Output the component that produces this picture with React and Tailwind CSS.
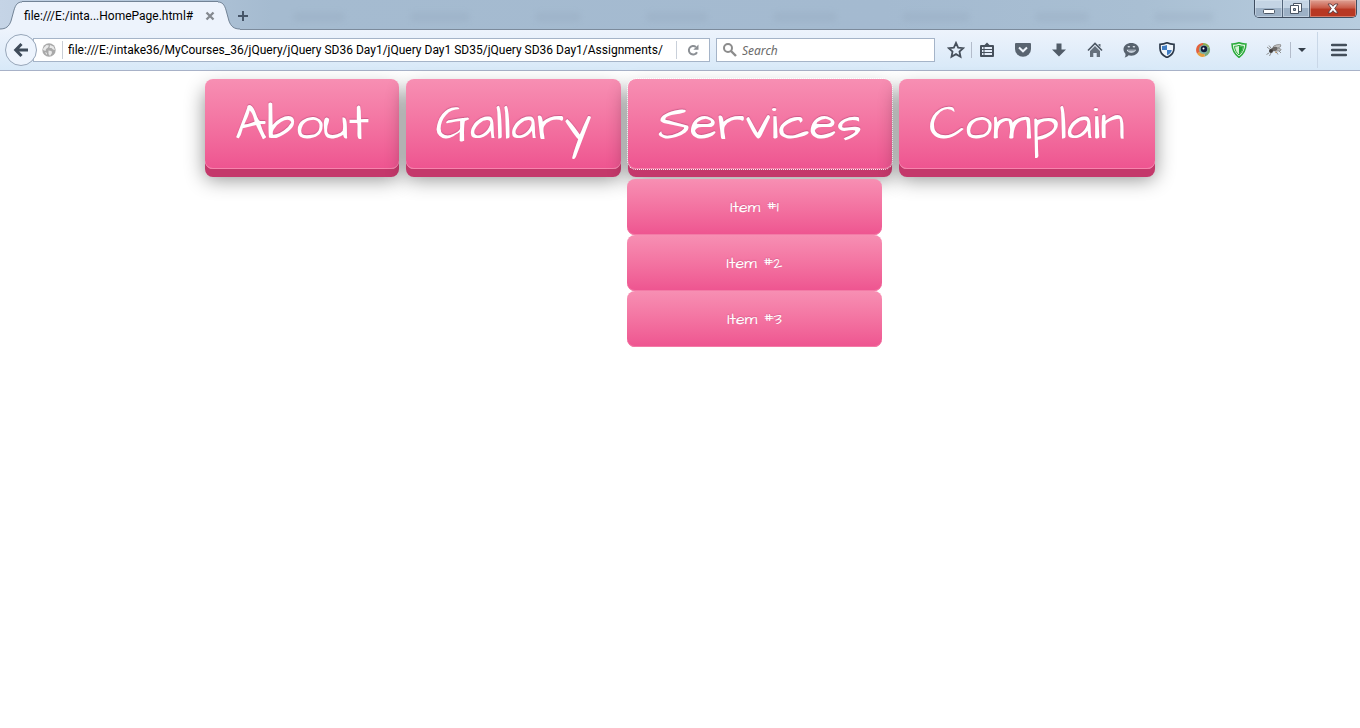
import React from "react";

const menu = [
  { label: "About", size: "w-[194px]" },
  { label: "Gallary", size: "w-[215px]" },
  { label: "Services", size: "w-[264px]", items: ["Item #1", "Item #2", "Item #3"] },
  { label: "Complain", size: "w-[256px]" },
];

const handFont = "font-['Architects_Daughter','Lato',sans-serif]";

function Icon({ children, size = 16 }) {
  return (
    <svg width={size} height={size} viewBox="0 0 16 16" aria-hidden="true">
      {children}
    </svg>
  );
}

function ToolButton({ label, className = "w-9", children }) {
  return (
    <button type="button" aria-label={label} className={`flex h-8 shrink-0 items-center justify-center ${className}`}>
      {children}
    </button>
  );
}

function Separator({ className = "h-4 bg-[#b3bccb]" }) {
  return <span className={`w-px shrink-0 ${className}`} />;
}

function WindowControls() {
  return (
    <div className="mr-[3px] flex h-[18px] shrink-0 self-start overflow-hidden rounded-b-[5px] border border-t-0 border-[#3f4d60]">
      <button type="button" aria-label="Minimize" className="flex w-7 items-center justify-center border-r border-[#53657a] bg-linear-to-b from-[#c4d4e4] from-45% to-[#9db1c6] to-50% shadow-[inset_0_0_0_1px_#dce7f188]">
        <svg width="14" height="14" viewBox="0 0 14 14"><rect x="1.500" y="7.500" width="11" height="4" rx="1" fill="#fff" stroke="#4b5665" /></svg>
      </button>
      <button type="button" aria-label="Restore" className="flex w-[27px] items-center justify-center border-r border-[#53657a] bg-linear-to-b from-[#c4d4e4] from-45% to-[#9db1c6] to-50% shadow-[inset_0_0_0_1px_#dce7f188]">
        <svg width="14" height="14" viewBox="0 0 14 14" stroke="#4b5665" fill="#fff">
          <path d="M4.500 1.500h8v8h-8z" />
          <path d="M1.500 3.500h8v8h-8z" />
          <path d="M4.500 6.500h2v2h-2z" fill="#9db1c6" />
        </svg>
      </button>
      <button type="button" aria-label="Close window" className="flex w-[46px] items-center justify-center bg-linear-to-b from-[#dda195] from-0% via-[#c95c49] via-45% to-[#b83823] to-55% shadow-[inset_0_0_0_1px_#f0b8a888]">
        <svg width="14" height="12" viewBox="0 0 14 12">
          <path d="M2 1h3l2 2.300L9 1h3L8.700 5.500l3.300 4.500H9L7 7.700 5 10H2l3.300-4.500z" fill="#fff" stroke="#5b3b40" strokeWidth=".9" />
        </svg>
      </button>
    </div>
  );
}

function TitleBar() {
  return (
    <header className="flex h-[30px] items-end bg-[linear-gradient(90deg,#c5d4e6_0,#a5bbd0_20%,#a4bad0_65%,#a9bfd3_84%,#b8cddf_100%)] shadow-[inset_0_-1px_0_#7c8b9c]">
      <div className="flex h-[30px] shrink-0">
        <svg width="22" height="30" viewBox="0 0 22 30" aria-hidden="true">
          <path d="M0 30v-1c6 0 9-2.500 11-8l3-11c1.500-5 3.500-8 8-8v28z" fill="#edf3fc" />
          <path d="M0 29c6 0 9-2.500 11-8l3-11c1.500-5 3.500-8 8-8" fill="none" stroke="#728396" />
        </svg>
        <div className="mt-[1px] flex w-[196px] items-center border-t border-[#728396] bg-[#edf3fc]">
          <span className="w-[180px] overflow-hidden pl-[2px] font-['Roboto',sans-serif] text-[12px] leading-4 whitespace-nowrap text-black">file:///E:/inta...HomePage.html#</span>
          <button type="button" aria-label="Close tab" className="flex size-4 shrink-0 items-center justify-center">
            <svg width="10" height="10" viewBox="0 0 10 10"><path d="M1.500 1.500l7 7M8.500 1.500l-7 7" stroke="#84898f" strokeWidth="2.300" /></svg>
          </button>
        </div>
        <svg width="22" height="30" viewBox="0 0 22 30" aria-hidden="true">
          <path d="M22 30v-1c-6 0-9-2.500-11-8L8 10C6.500 5 4.500 2 0 2v28z" fill="#edf3fc" />
          <path d="M22 29c-6 0-9-2.500-11-8L8 10C6.500 5 4.500 2 0 2" fill="none" stroke="#728396" />
        </svg>
      </div>
      <button type="button" aria-label="New tab" className="-ml-[7px] flex h-7 w-5 items-center justify-center">
        <svg width="12" height="12" viewBox="0 0 12 12"><path d="M6 1v10M1 6h10" stroke="#465568" strokeWidth="2" /></svg>
      </button>
      <div aria-hidden="true" className="flex h-[26px] flex-1 items-center justify-around px-2 opacity-25 blur-[3px]">
        {[50, 58, 44, 60, 62, 66, 52, 58].map((w, i) => (
          <span key={i} className="h-2 bg-[#8c9fb4]" style={{ width: w }} />
        ))}
      </div>
      <WindowControls />
    </header>
  );
}

function Toolbar() {
  return (
    <div className="flex h-[41px] items-center border-b border-[#a8b2c8] bg-linear-to-b from-[#edf3fc] to-[#d8e9f8] text-[12px]">
      <button type="button" aria-label="Back" className="z-10 ml-[5px] flex size-8 shrink-0 items-center justify-center rounded-full border border-[#97a6b9] bg-[#edf4fd]">
        <svg width="16" height="16" viewBox="0 0 16 16"><path d="M8.500 2L2.700 8l5.800 6M3 8h12" fill="none" stroke="#3f4c5b" strokeWidth="3" /></svg>
      </button>
      <div className="-ml-1 flex h-6 min-w-0 flex-1 items-center border border-[#a5b4c8] bg-white">
        <span className="flex w-[28px] shrink-0 justify-center pl-[2px]">
          <Icon>
            <circle cx="8" cy="8" r="6.700" fill="#a9a9a9" />
            <path d="M2.500 6l3-3 2.500.5-1 2-2 1.500-.5 2L2 8zM9 3l3.500 1.500L14 8l-2-.5-1.500-1.500L8.500 6zM7.500 8.500l3 .5.500 2-2 3-1.500-2zM4 10l2 1-.5 2z" fill="#e9e9e9" />
          </Icon>
        </span>
        <Separator className="h-[18px] bg-[#c9ced6]" />
        <div className="min-w-0 flex-1 pr-[12px] pl-[5px]">
          <input
            aria-label="Address"
            readOnly
            value="file:///E:/intake36/MyCourses_36/jQuery/jQuery SD36 Day1/jQuery Day1 SD35/jQuery SD36 Day1/Assignments/"
            className="block h-5 w-full bg-transparent font-['Roboto',sans-serif] text-black outline-none"
          />
        </div>
        <Separator className="h-[18px] bg-[#c9d0da]" />
        <ToolButton label="Reload" className="w-8">
          <svg width="12" height="12" viewBox="0 0 12 12">
            <path d="M10 8.200A4.300 4.300 0 1 1 8.900 2.900" fill="none" stroke="#8b8f94" strokeWidth="2" />
            <path d="M11.500 0.500v5.200H6.300z" fill="#8b8f94" />
          </svg>
        </ToolButton>
      </div>
      <label className="ml-[6px] flex h-6 w-[219px] shrink-0 items-center gap-1 border border-[#a5b4c8] bg-white pl-[5px]">
        <Icon>
          <circle cx="6" cy="6" r="4" fill="none" stroke="#8c8c8c" strokeWidth="2" />
          <path d="M9 9l5 5" stroke="#8c8c8c" strokeWidth="2.400" />
        </Icon>
        <input aria-label="Search" placeholder="Search" className="h-5 min-w-0 flex-1 bg-transparent font-['Noto_Sans',sans-serif] italic outline-none placeholder:text-[#6a6a6a]" />
      </label>

      <ToolButton label="Bookmark this page" className="ml-[5px] w-[31px]">
        <Icon size={18}><path d="M8 1.700l1.900 4.200 4.500.5-3.300 3.100.9 4.500-4-2.300L4 14l.9-4.500-3.300-3.100 4.500-.5z" fill="none" stroke="#46505c" strokeWidth="1.600" /></Icon>
      </ToolButton>
      <Separator />
      <ToolButton label="Bookmarks list" className="mr-[3px] w-[30px]">
        <Icon>
          <path d="M1 4a1 1 0 0 1 1-1h3.500L8 .5 10.500 3H14a1 1 0 0 1 1 1v10a1 1 0 0 1-1 1H2a1 1 0 0 1-1-1z" fill="#46505c" />
          <path d="M3 5h1.500v2H3zM5.500 5H13v2H5.500zM3 8h1.500v2H3zM5.500 8H13v2H5.500zM3 11h1.500v2H3zM5.500 11H13v2H5.500z" fill="#e5eefa" />
        </Icon>
      </ToolButton>
      <ToolButton label="Pocket">
        <Icon>
          <path d="M1 1h14q1 0 1 1v5A8 7.800 0 0 1 0 7V2q0-1 1-1z" fill="#596470" />
          <path d="M4 5.500l4 3.800 4-3.800" fill="none" stroke="#eef4fb" strokeWidth="2" />
        </Icon>
      </ToolButton>
      <ToolButton label="Downloads">
        <Icon><path d="M5.500 1.500h5v6H15l-7 7-7-7h4.500z" fill="#515c68" /></Icon>
      </ToolButton>
      <ToolButton label="Home">
        <Icon>
          <path d="M1 8.500l7-7 7 7" fill="none" stroke="#4d5864" strokeWidth="1.600" />
          <path d="M8 4l5 5v6H9.700v-4H6.300v4H3V9zM11.500 2h2v3l-2-1.500z" fill="#66717d" />
        </Icon>
      </ToolButton>
      <ToolButton label="Chat">
        <Icon>
          <path d="M8.300 1c4.300 0 7.700 2.700 7.700 6.300s-3.400 6.400-7.700 6.400c-1 0-2-.2-2.800-.5-1 1.300-2.500 2.200-4 2.300 1-1.200 1.200-2.500.9-3.800C1.300 10.400.5 9 .5 7.200.5 3.700 4 1 8.300 1z" fill="#57626e" />
          <path d="M4.800 5.200q1-1.100 2 0M9.900 5.200q1-1.100 2 0" fill="none" stroke="#e8f0fa" strokeWidth="1.200" />
          <path d="M3.700 7.800h9.300q-1 3-4.700 3t-4.600-3z" fill="#e8f0fa" />
          <path d="M5 8.800h6.800" stroke="#57626e" strokeWidth=".8" />
        </Icon>
      </ToolButton>
      <ToolButton label="Blue shield">
        <Icon>
          <path d="M8 .8c2.200 1 4.500 1.500 7 1.500v4c0 4.500-3 7.500-7 9.200-4-1.700-7-4.700-7-9.200v-4c2.500 0 4.800-.5 7-1.500z" fill="#eff5fb" stroke="#2c3949" strokeWidth="1.700" />
          <path d="M8 3v5H3V4q2.500 0 5-1zM8 8h4.800c-.3 2.500-2 4-4.800 5.300z" fill="#3f7cc2" />
        </Icon>
      </ToolButton>
      <ToolButton label="Color picker">
        <Icon>
          <path d="M8 1a7 7 0 0 1 6.500 4L8 8z" fill="#8cad52" />
          <path d="M14.500 5A7 7 0 0 1 10 14.500L8 8z" fill="#7baa76" />
          <path d="M10 14.500A7 7 0 0 1 2 11.500L8 8z" fill="#e7a03f" />
          <path d="M2 11.500A7 7 0 0 1 8 1v7z" fill="#e4613c" />
          <circle cx="8.500" cy="7.500" r="4.500" fill="#7fb0a4" />
          <circle cx="9" cy="7" r="3.200" fill="#111d3c" />
          <circle cx="8.500" cy="6.500" r="1" fill="#fff" />
        </Icon>
      </ToolButton>
      <ToolButton label="Green shield">
        <Icon>
          <path d="M8 .8c2.300 1 4.600 1.300 7 1.200-.2 6-2.600 10.300-7 13.300C3.600 12.300 1.200 8 1 2 3.400 2.100 5.700 1.800 8 .8z" fill="#e4f7e4" stroke="#2bab3c" strokeWidth="1.500" />
          <path d="M8 3.400c1.500.6 3 .9 4.500.9-.4 3.700-1.800 6.500-4.500 8.700-2.700-2.200-4.100-5-4.500-8.700 1.500 0 3-.3 4.500-.9z" fill="#d2f2d4" stroke="#2bab3c" />
          <path d="M8 4v8.500c2.400-2.200 3.600-4.600 4-8-1.300 0-2.700-.1-4-.5z" fill="#21a235" />
        </Icon>
      </ToolButton>
      <ToolButton label="Firebug" className="w-[33px]">
        <Icon>
          <path d="M1 5l4 3M3 3.500l3 4M3 11l-2.500 1.500M5 11l-1.500 3M10 9.500l2 3M12 8l3 3M12 5l3-2.500" stroke="#777" strokeWidth=".8" />
          <ellipse cx="11" cy="4.500" rx="4" ry="1.700" transform="rotate(-15 11 4.500)" fill="#c4c4c4" stroke="#777" strokeWidth=".6" />
          <ellipse cx="11" cy="7.500" rx="4.200" ry="1.500" transform="rotate(5 11 7.500)" fill="#bbb" stroke="#777" strokeWidth=".6" />
          <ellipse cx="8.500" cy="7" rx="3" ry="2" transform="rotate(-20 8.500 7)" fill="#6a6766" />
          <circle cx="5" cy="9" r="2" fill="#3f3b3a" />
          <path d="M9 10l2 .5" stroke="#b78a55" />
        </Icon>
      </ToolButton>
      <Separator />
      <ToolButton label="Firebug options" className="mr-[5px] w-[21px]">
        <svg width="8" height="4" viewBox="0 0 8 4"><path d="M0 0h8L4 4z" fill="#343e4a" /></svg>
      </ToolButton>
      <Separator className="h-9 bg-[#c9d7e7]" />
      <ToolButton label="Open menu" className="w-[42px]">
        <svg width="16" height="14" viewBox="0 0 16 14"><path d="M1 2h14M1 7h14M1 12h14" stroke="#434e5a" strokeWidth="2.500" strokeLinecap="round" /></svg>
      </ToolButton>
    </div>
  );
}

function SubMenu({ items }) {
  return (
    <ul className="absolute top-[100px] -left-px w-[255px]">
      {items.map((item) => (
        <li key={item}>
          <a href="#" className={`flex h-14 items-center justify-center rounded-lg bg-linear-to-b from-[#f78fb3] to-[#ee5490] text-[16px] leading-6 text-white shadow-[inset_0_-1px_0_#f37ba6] text-shadow-[0_-1px_1px_#b8487866] ${handFont}`}>
            {item}
          </a>
        </li>
      ))}
    </ul>
  );
}

export default function App() {
  return (
    <div className="min-h-screen bg-white">
      <TitleBar />
      <Toolbar />
      <main className="pt-2">
        <nav aria-label="Main menu">
          <ul className="flex justify-center gap-[7px]">
            {menu.map(({ label, size, items }) => (
              <li key={label} className={`relative ${size}`}>
                <a
                  href="#"
                  className={`flex h-[90px] items-center justify-center rounded-lg bg-linear-to-b from-[#f78fb3] to-[#ee5490] pt-[2px] text-[50px] leading-[88px] text-white shadow-[inset_0_-1px_0_#f685ad,0_8px_0_#c4386b,0_10px_20px_#00000073] text-shadow-[0_-1px_1px_#b8487899] ${handFont} ${items ? "outline-1 outline-dotted outline-white" : ""}`}
                >
                  {label}
                </a>
                {items && <SubMenu items={items} />}
              </li>
            ))}
          </ul>
        </nav>
      </main>
    </div>
  );
}
